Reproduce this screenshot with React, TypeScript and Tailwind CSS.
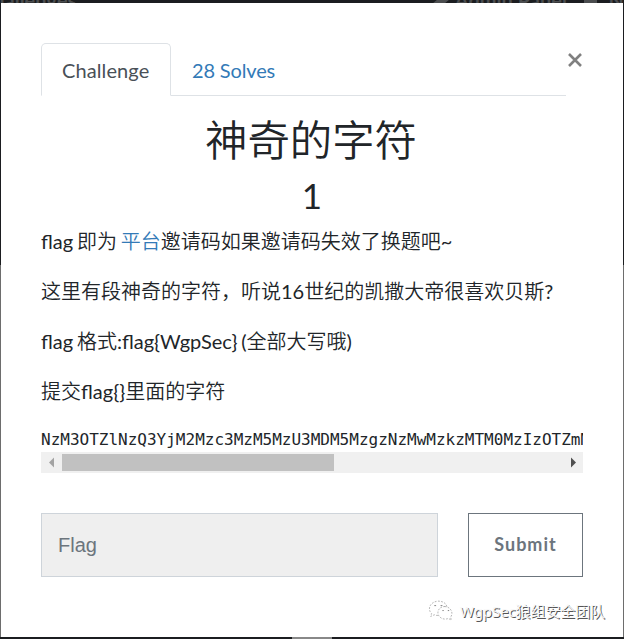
import React from 'react';

const paragraphs = [
  '这里有段神奇的字符，听说16世纪的凯撒大帝很喜欢贝斯?',
  'flag 格式:flag{WgpSec} (全部大写哦)',
  '提交flag{}里面的字符',
];

// Sets runs of Chinese characters in a lighter weight than the Latin text.
function Mixed({ text }: { text: string }) {
  return (
    <>
      {text.split(/([\u3000-\u9fff\uff00-\uffef]+)/).map((run, i) =>
        i % 2 ? <span key={i} className="font-[350] font-['Noto_Sans_CJK_SC_DemiLight','Noto_Sans_CJK_SC',sans-serif]">{run}</span> : run,
      )}
    </>
  );
}

function Backdrop() {
  return (
    <div className="flex h-[3px] items-end overflow-hidden text-[20px] leading-[14px] font-bold text-[#4b4d4f]">
      <span className="-mb-[4px] -ml-[20px] w-[459px]">Challenges</span>
      <span className="h-[3px] w-[12px] -skew-x-[50deg] bg-[#4b4d4f]" />
      <span className="-mb-[4px] ml-[8px] w-[130px] whitespace-nowrap">Admin Panel</span>
      <span className="h-[3px] w-[13px] shrink-0 bg-[#4b4d4f]" />
      <span className="-mb-[4px] ml-[12px]">N</span>
    </div>
  );
}

function Tabs() {
  return (
    <div className="flex h-[53px] w-[525px] border-b border-[#dee2e6]">
      <div className="h-[53px] w-[130px] rounded-t-[5px] border border-b-white border-[#dee2e6] bg-white pl-[20px] pt-[11px] leading-[30px] tracking-[0.1px] text-[#495057]">
        Challenge
      </div>
      <div className="pl-[21px] pt-[12px] leading-[30px] tracking-[-0.15px] text-[#337ab7]">28 Solves</div>
    </div>
  );
}

function ScrollBar() {
  return (
    <div className="flex h-[21px] items-center bg-[#f0f0f0]">
      <svg className="h-[21px] w-[21px]" viewBox="0 0 21 21"><path d="M13 5.5v10L8 10.5z" fill="#a3a3a3" /></svg>
      <div className="h-[17px] w-[272px] bg-[#c1c1c1]" />
      <svg className="ml-auto h-[21px] w-[21px]" viewBox="0 0 21 21"><path d="M9 5.500v10l5-5z" fill="#505050" /></svg>
    </div>
  );
}

function Watermark() {
  return (
    <div className="absolute right-[19px] bottom-[16px] flex items-center gap-[5px]">
      <svg className="h-[24px] w-[27px]" viewBox="0 0 30 26" fill="none" stroke="#999" strokeWidth=".8" strokeDasharray="2 1.500">
        <path d="M11 18c-1.500 0-2.500-.2-4-.8L3 19l1-3C-1 11 2 3 11 2c6 0 10 3 10 7" />
        <path d="M19 8c-5 0-8 3-8 7s4 7 8 7c1.500 0 2.500-.3 3.500-.7l3.500 1.700-1-3c4-5 0-12-7-12z" />
        <path d="M7 7h2M14 7h2M16 12.500h1.500M22 12.500h1.500" stroke="#555" strokeDasharray="none" />
      </svg>
      <span className="text-[15px] leading-[24px] tracking-[-0.1px] whitespace-nowrap text-[#f7f7f7] font-['Noto_Sans','Noto_Sans_CJK_SC',sans-serif] [text-shadow:1px_1px_0_#555]">
        WgpSec狼组安全团队
      </span>
    </div>
  );
}

function Edge() {
  return (
    <div className="flex w-px flex-col">
      <div className="h-[262px]" />
      <div className="grow bg-[#6d6d6d]" />
    </div>
  );
}

export default function App() {
  return (
    <div className="relative flex h-[639px] w-[624px] flex-col overflow-hidden bg-[#1b1d20] text-[20px] text-[#212529] font-['Lato','Noto_Sans_CJK_SC',sans-serif]">
      <Backdrop />
      <div className="flex h-[634px]">
        <Edge />
        <div className="flex w-[622px] flex-col bg-white px-[40px] pt-[40px]">
          <div className="flex">
            <Tabs />
            <svg className="mt-[10px] ml-[1.5px] h-[14px] w-[14px]" viewBox="0 0 14 14" stroke="#808080" strokeWidth="2.6">
              <path d="M1 1l12 12M13 1L1 13" />
            </svg>
          </div>
          <h2 className="mt-[11px] h-[62px] pr-[2px] text-center text-[42.4px] leading-[62px]"><Mixed text="神奇的字符" /></h2>
          <h3 className="mb-[5px] text-center text-[35px] leading-[52px]">1</h3>
          <div className="flex flex-col gap-[20px] leading-[30px] whitespace-nowrap [word-spacing:-1.3px]">
            <p className="h-[30px]">
              flag <Mixed text="即为" /> <a className="text-[#337ab7]"><Mixed text="平台" /></a><Mixed text="邀请码如果邀请码失效了换题吧~" />
            </p>
            {paragraphs.map((text) => (
              <p key={text} className="h-[30px]"><Mixed text={text} /></p>
            ))}
          </div>
          <pre className="mt-[21px] h-[25px] overflow-hidden text-[16px] leading-[26px] font-['DejaVu_Sans_Mono',monospace]">
            NzM3OTZlNzQ3YjM2Mzc3MzM5MzU3MDM5MzgzNzMwMzkzMTM0MzIzOTZmMz
          </pre>
          <ScrollBar />
          <div className="mt-[40px] flex justify-between">
            <div className="flex h-[64px] w-[397px] items-center border border-[#ced4da] bg-[#efefef] pb-[1px] pl-[16px] text-[#6c757d] font-['Liberation_Sans',sans-serif]">
              Flag
            </div>
            <button className="h-[64px] w-[115px] border border-[#6c757d] pb-[2px] text-[18px] font-bold tracking-[1px] text-[#6c757d]">
              Submit
            </button>
          </div>
        </div>
        <Edge />
      </div>
      <div className="ml-[292px] h-[2px] w-[40px] bg-[#888]" />
      <Watermark />
    </div>
  );
}
